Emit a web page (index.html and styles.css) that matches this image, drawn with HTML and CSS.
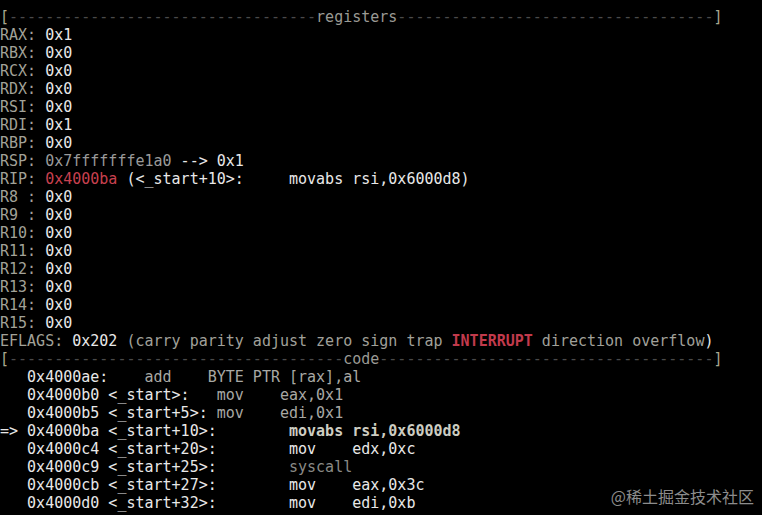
FILE: index.html
```html
<!DOCTYPE html>
<html>
<head>
<meta charset="utf-8">
<link rel="stylesheet" href="styles.css">
</head>
<body>
<div class="term">
<div class="ln"><span class="br">[</span><span class="dash">----------------------------------</span><span class="ttl">registers</span><span class="dash">-----------------------------------</span><span class="br">]</span></div>
<div class="ln"><span class="rn">RAX</span><span class="rn">: </span><span class="v">0x1</span></div>
<div class="ln"><span class="rn">RBX: </span><span class="v">0x0</span></div>
<div class="ln"><span class="rn">RCX: </span><span class="v">0x0</span></div>
<div class="ln"><span class="rn">RDX: </span><span class="v">0x0</span></div>
<div class="ln"><span class="rn">RSI: </span><span class="v">0x0</span></div>
<div class="ln"><span class="rn">RDI: </span><span class="v">0x1</span></div>
<div class="ln"><span class="rn">RBP: </span><span class="v">0x0</span></div>
<div class="ln"><span class="rn">RSP: </span><span class="dim">0x7fffffffe1a0</span><span class="v"> --&gt; 0x1</span></div>
<div class="ln"><span class="rn">RIP: </span><span class="red">0x4000ba</span><span class="v"> (&lt;_start+10&gt;:     movabs rsi,0x6000d8)</span></div>
<div class="ln"><span class="rn">R8 : </span><span class="v">0x0</span></div>
<div class="ln"><span class="rn">R9 : </span><span class="v">0x0</span></div>
<div class="ln"><span class="rn">R10: </span><span class="v">0x0</span></div>
<div class="ln"><span class="rn">R11: </span><span class="v">0x0</span></div>
<div class="ln"><span class="rn">R12: </span><span class="v">0x0</span></div>
<div class="ln"><span class="rn">R13: </span><span class="v">0x0</span></div>
<div class="ln"><span class="rn">R14: </span><span class="v">0x0</span></div>
<div class="ln"><span class="rn">R15: </span><span class="v">0x0</span></div>
<div class="ln"><span class="rn">EFLAGS: </span><span class="v">0x202 </span><span class="flag">(carry parity adjust zero sign trap </span><span class="intr">INTERRUPT</span><span class="flag"> direction overflow</span><span class="v">)</span></div>
<div class="ln"><span class="br">[</span><span class="dash">-------------------------------------</span><span class="ttl">code</span><span class="dash">-------------------------------------</span><span class="br">]</span></div>
<div class="ln"><span class="v">   0x4000ae:    </span><span class="gr">add    BYTE PTR [rax],al</span></div>
<div class="ln"><span class="v">   0x4000b0 &lt;_start&gt;:   </span><span class="gr">mov    eax,0x1</span></div>
<div class="ln"><span class="v">   0x4000b5 &lt;_start+5&gt;: </span><span class="gr">mov    edi,0x1</span></div>
<div class="ln"><span class="v">=&gt; 0x4000ba &lt;_start+10&gt;:        </span><span class="cur">movabs rsi,0x6000d8</span></div>
<div class="ln"><span class="v">   0x4000c4 &lt;_start+20&gt;:        mov    edx,0xc</span></div>
<div class="ln"><span class="v">   0x4000c9 &lt;_start+25&gt;:        </span><span class="sys">syscall</span></div>
<div class="ln"><span class="v">   0x4000cb &lt;_start+27&gt;:        mov    eax,0x3c</span></div>
<div class="ln"><span class="v">   0x4000d0 &lt;_start+32&gt;:        mov    edi,0xb</span></div>
</div>
<div class="wm">@稀土掘金技术社区</div>
</body>
</html>
```
FILE: styles.css
```css
html, body {
  margin: 0;
  padding: 0;
  background: #000;
  width: 762px;
  height: 515px;
  overflow: hidden;
}
body {
  position: relative;
}
.term {
  padding-top: 8px;
  font-family: "DejaVu Sans Mono", monospace;
  font-size: 15px;
  line-height: 18px;
  color: #e6e6e6;
}
.ln {
  white-space: pre;
  height: 18px;
}
.br { color: #a8a890; }
.dash { color: #4a4a4a; }
.ttl { color: #9a9a94; }
.rn { color: #a2a298; }
.v { color: #e8e8e8; }
.dim { color: #9a9a9a; }
.red { color: #c8404f; }
.flag { color: #a0a09a; }
.intr { color: #c23a4c; font-weight: bold; }
.gr { color: #a8a8a4; }
.cur { color: #cdcdc2; font-weight: bold; }
.sys { color: #8a8a86; }
.wm {
  position: absolute;
  right: 8px;
  bottom: 9px;
  font-family: "Noto Sans CJK SC", sans-serif;
  font-size: 16px;
  line-height: 20px;
  color: #8c8c8c;
}
```
